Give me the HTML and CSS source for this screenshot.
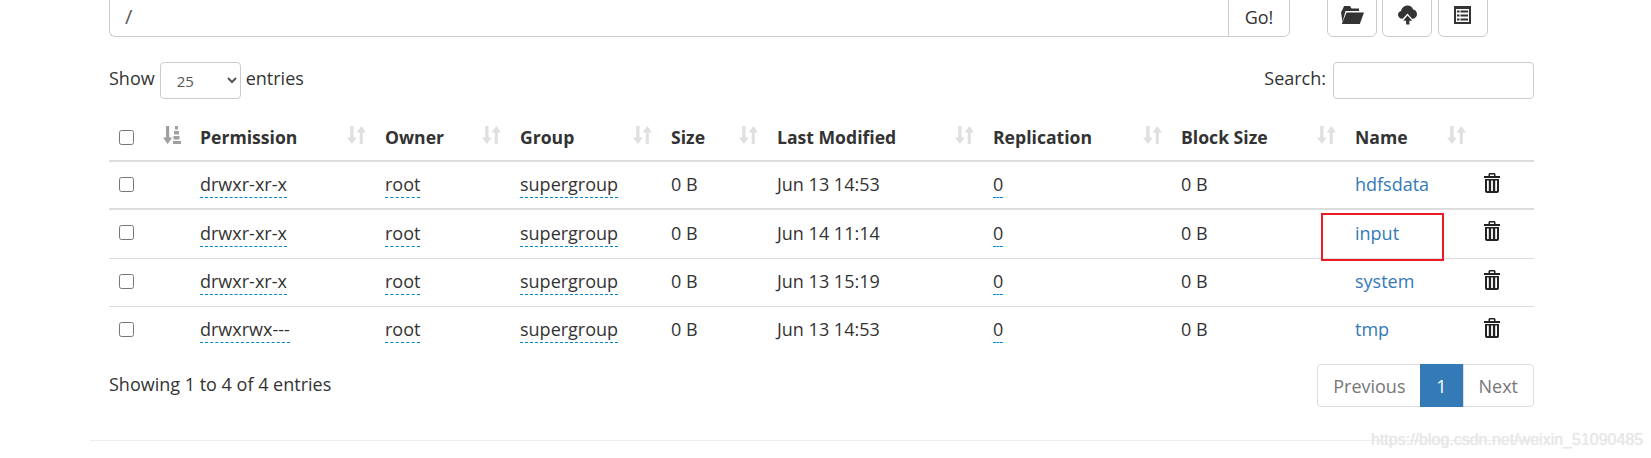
FILE: index.html
```html
<!DOCTYPE html>
<html lang="en">
<head>
<meta charset="utf-8">
<title>Browse Directory</title>
<link rel="stylesheet" href="styles.css">
</head>
<body>
<svg class="defs" aria-hidden="true">
  <symbol id="sort" viewBox="0 0 18 18" preserveAspectRatio="none">
    <path d="M3 0h3.200v11.500H9.300L4.600 18 0 11.500h3zM12 6.500H9L13.700 0l4.300 6.500h-3V18h-3z"/>
  </symbol>
  <symbol id="sort-attr" viewBox="0 0 18 18">
    <path d="M3 0h3.200v11.500H9.300L4.600 18 0 11.500h3zM12 0h3v3.500h-3zM11 5h5v3.500h-5zM10.500 10h6v3.500h-6zM10 15h8v3h-8z"/>
  </symbol>
  <symbol id="trash" viewBox="0 0 16 20">
    <path d="M6 0h4c1 0 1.500.6 1.500 1.500V3H16v2H0V3h4.500V1.500C4.500.6 5 0 6 0zm0 1.500V3h4V1.500zM1 6h14v12c0 1.300-.7 2-2 2H3c-1.300 0-2-.7-2-2zm2 1.500V18h1.800V7.500zm4.100 0V18h1.800V7.500zm4.100 0V18H13V7.500z" fill-rule="evenodd"/>
  </symbol>
</svg>
<main class="page">
  <div class="toolbar">
    <div class="path-group">
      <input class="path-input" type="text" value="/">
      <button class="go-btn" type="button">Go!</button>
    </div>
    <div class="tools">
      <button class="tool-btn" type="button" aria-label="Create directory">
        <svg class="i-folder" viewBox="0 0 24 18"><path d="M3 2.500 4 0h6l1.500 2.500H19V5H5.500L2.500 16 1 6.500zM6.500 6.500H24L19.800 18H1.800z"/></svg>
      </button>
      <button class="tool-btn" type="button" aria-label="Upload">
        <svg class="i-cloud" viewBox="0 0 20 20"><path d="M5 14H4.500C2 14 0 12.200 0 9.800 0 7.800 1.300 6.300 3.200 5.800 3.900 2.500 6.600 0 10 0c2.800 0 5 1.700 6 4.200 2.300.3 4 2.300 4 4.800 0 2.800-2.100 5-5 5h-.200L10 8.500z"/><path d="M10 10.500 15 16h-3v4H8.500v-4H5.500z"/></svg>
      </button>
      <button class="tool-btn" type="button" aria-label="Table view">
        <svg class="i-list" viewBox="0 0 17 18"><path fill-rule="evenodd" d="M0 0h17v18H0zM2 3v13h13V3zM3 4.500h2.500v2H3zM6.500 4.500H14v2H6.500zM3 8.500h2.500v2H3zM6.500 8.500H14v2H6.500zM3 12.500h2.500v2H3zM6.500 12.500H14v2H6.500z"/></svg>
      </button>
    </div>
  </div>

  <div class="controls">
    <label class="length">Show
      <select class="length-select"><option>25</option><option>50</option></select>
      entries</label>
    <label class="search">Search:
      <input class="search-input" type="search">
    </label>
  </div>

  <table class="files">
    <colgroup>
      <col class="c-check"><col class="c-sort"><col class="c-perm"><col class="c-owner"><col class="c-group"><col class="c-size"><col class="c-mod"><col class="c-rep"><col class="c-block"><col class="c-name"><col class="c-del">
    </colgroup>
    <thead>
      <tr>
        <th><input class="check" type="checkbox"></th>
        <th><svg class="sort first"><use href="#sort-attr"/></svg></th>
        <th>Permission<svg class="sort"><use href="#sort"/></svg></th>
        <th>Owner<svg class="sort"><use href="#sort"/></svg></th>
        <th>Group<svg class="sort"><use href="#sort"/></svg></th>
        <th>Size<svg class="sort"><use href="#sort"/></svg></th>
        <th>Last Modified<svg class="sort"><use href="#sort"/></svg></th>
        <th>Replication<svg class="sort"><use href="#sort"/></svg></th>
        <th>Block Size<svg class="sort"><use href="#sort"/></svg></th>
        <th>Name<svg class="sort"><use href="#sort"/></svg></th>
        <th></th>
      </tr>
    </thead>
    <tbody>
      <tr>
        <td><input class="check" type="checkbox"></td><td></td>
        <td><span class="edit">drwxr-xr-x</span></td>
        <td><span class="edit">root</span></td>
        <td><span class="edit">supergroup</span></td>
        <td>0 B</td><td>Jun 13 14:53</td>
        <td><span class="edit">0</span></td>
        <td>0 B</td>
        <td><a class="link" href="#">hdfsdata</a></td>
        <td><svg class="trash"><use href="#trash"/></svg></td>
      </tr>
      <tr>
        <td><input class="check" type="checkbox"></td><td></td>
        <td><span class="edit">drwxr-xr-x</span></td>
        <td><span class="edit">root</span></td>
        <td><span class="edit">supergroup</span></td>
        <td>0 B</td><td>Jun 14 11:14</td>
        <td><span class="edit">0</span></td>
        <td>0 B</td>
        <td class="marked"><a class="link" href="#">input</a><span class="redbox"></span></td>
        <td><svg class="trash"><use href="#trash"/></svg></td>
      </tr>
      <tr>
        <td><input class="check" type="checkbox"></td><td></td>
        <td><span class="edit">drwxr-xr-x</span></td>
        <td><span class="edit">root</span></td>
        <td><span class="edit">supergroup</span></td>
        <td>0 B</td><td>Jun 13 15:19</td>
        <td><span class="edit">0</span></td>
        <td>0 B</td>
        <td><a class="link" href="#">system</a></td>
        <td><svg class="trash"><use href="#trash"/></svg></td>
      </tr>
      <tr>
        <td><input class="check" type="checkbox"></td><td></td>
        <td><span class="edit">drwxrwx---</span></td>
        <td><span class="edit">root</span></td>
        <td><span class="edit">supergroup</span></td>
        <td>0 B</td><td>Jun 13 14:53</td>
        <td><span class="edit">0</span></td>
        <td>0 B</td>
        <td><a class="link" href="#">tmp</a></td>
        <td><svg class="trash"><use href="#trash"/></svg></td>
      </tr>
    </tbody>
  </table>

  <div class="footer-row">
    <div class="info">Showing 1 to 4 of 4 entries</div>
    <nav class="pager">
      <a class="pg" href="#">Previous</a><a class="pg active" href="#">1</a><a class="pg" href="#">Next</a>
    </nav>
  </div>
</main>
<hr class="rule">
<div class="watermark">https://blog.csdn.net/weixin_51090485</div>
</body>
</html>
```
FILE: styles.css
```css
* { box-sizing: border-box; }
html, body { margin: 0; height: 458px; overflow: hidden; background: #fff; }
body {
  position: relative;
  font-family: "Open Sans", "Noto Sans", sans-serif;
  font-size: 18px;
  line-height: 24px;
  color: #333;
}
.defs { display: none; }
.page { margin: -10px 117px 0 109px; }

.toolbar { display: flex; height: 47px; }
.path-group { display: flex; width: 1181px; }
.path-input {
  flex: 1;
  min-width: 0;
  height: 47px;
  padding: 5px 15px 0;
  border: 1px solid #ccc;
  border-right: 0;
  border-radius: 0 0 0 6px;
  font: inherit;
  font-size: 20px;
  color: #555;
}
.go-btn {
  width: 62px;
  height: 47px;
  padding: 7px 0 0;
  background: #fff;
  border: 1px solid #ccc;
  border-radius: 0 0 6px 0;
  font: inherit;
  color: #333;
}
.tools { display: flex; gap: 5.400px; margin-left: 37px; }
.tool-btn {
  display: flex;
  align-items: center;
  justify-content: center;
  width: 50px;
  height: 47px;
  padding: 6px 0 0;
  background: #fff;
  border: 1px solid #ccc;
  border-radius: 6px;
}
.tool-btn svg { display: block; fill: #333; }
.i-folder { width: 24px; height: 18px; margin-top: -3px; }
.i-cloud { width: 19px; height: 20px; margin-top: -4px; }
.i-list { width: 17px; height: 18px; margin-top: -4px; fill: #222; }

.controls {
  display: flex;
  justify-content: space-between;
  margin-top: 25px;
  height: 37px;
}
.length, .search { display: flex; align-items: flex-start; line-height: 32px; }
.length-select {
  width: 81px;
  height: 37px;
  margin: 0 5px;
  padding: 0 6px 0 12px;
  background: #fff;
  border: 1px solid #ccc;
  border-radius: 4px;
  font: inherit;
  font-size: 15px;
  color: #555;
}
.search-input {
  width: 201px;
  height: 37px;
  margin-left: 7px;
  background: #fff;
  border: 1px solid #ccc;
  border-radius: 4px;
}

.files {
  width: 100%;
  margin-top: 13px;
  table-layout: fixed;
  border-collapse: collapse;
}
.c-check { width: 41px; }
.c-sort { width: 40px; }
.c-perm { width: 185px; }
.c-owner { width: 135px; }
.c-group { width: 151px; }
.c-size { width: 106px; }
.c-mod { width: 216px; }
.c-rep { width: 188px; }
.c-block { width: 174px; }
.c-name { width: 130px; }
.c-del { width: 59px; }

.files th {
  position: relative;
  height: 49px;
  padding: 2px 10px 0;
  text-align: left;
  font-size: 17.600px;
  font-weight: 700;
  border-bottom: 2px solid #ddd;
}
.files td {
  height: 48px;
  padding: 0 10px 2px;
  border-top: 1px solid #ddd;
}
.files tbody tr:first-child td { border-top: 0; height: 48px; }
.files tbody tr:nth-child(2) td { border-top: 2px solid #ddd; height: 49px; }
.check {
  display: block;
  width: 15px;
  height: 15px;
  margin: 0;
}
.sort {
  position: absolute;
  top: 14px;
  right: 9px;
  width: 19px;
  height: 18px;
  fill: #e0e0e0;
}
.sort.first { right: auto; left: 13px; width: 18px; fill: #a0a0a0; }
.edit { padding-bottom: 1px; border-bottom: 1px dashed #08c; }
.link { color: #337ab7; text-decoration: none; }
.trash { display: block; width: 16px; height: 20px; margin: -3px 0 0 -1px; fill: #222; }

.marked { position: relative; }
.redbox {
  position: absolute;
  top: 3px;
  left: -24px;
  width: 123px;
  height: 48px;
  border: 2px solid #ed1c24;
}

.footer-row {
  display: flex;
  justify-content: space-between;
  align-items: flex-start;
  margin-top: 10px;
}
.info { padding-top: 8px; }
.pager { display: flex; height: 43px; }
.pg {
  display: block;
  padding: 9px 15px;
  margin-left: -1px;
  border: 1px solid #ddd;
  color: #777;
  text-decoration: none;
  background: #fff;
}
.pg:first-child { padding-left: 15px; padding-right: 14px; border-radius: 4px 0 0 4px; }
.pg:last-child { border-radius: 0 4px 4px 0; }
.pg.active { width: 44px; padding: 9px 0; text-align: center; color: #fff; background: #337ab7; border-color: #337ab7; }

.rule {
  position: absolute;
  top: 440px;
  left: 90px;
  right: 117px;
  margin: 0;
  border: 0;
  border-top: 1px solid #eee;
}
.watermark {
  position: absolute;
  top: 428px;
  left: 1371px;
  font-family: "Liberation Sans", sans-serif;
  font-size: 16px;
  color: #e8e8e8;
  text-shadow: 0 0 1px #e0e0e0;
  white-space: nowrap;
}
```
